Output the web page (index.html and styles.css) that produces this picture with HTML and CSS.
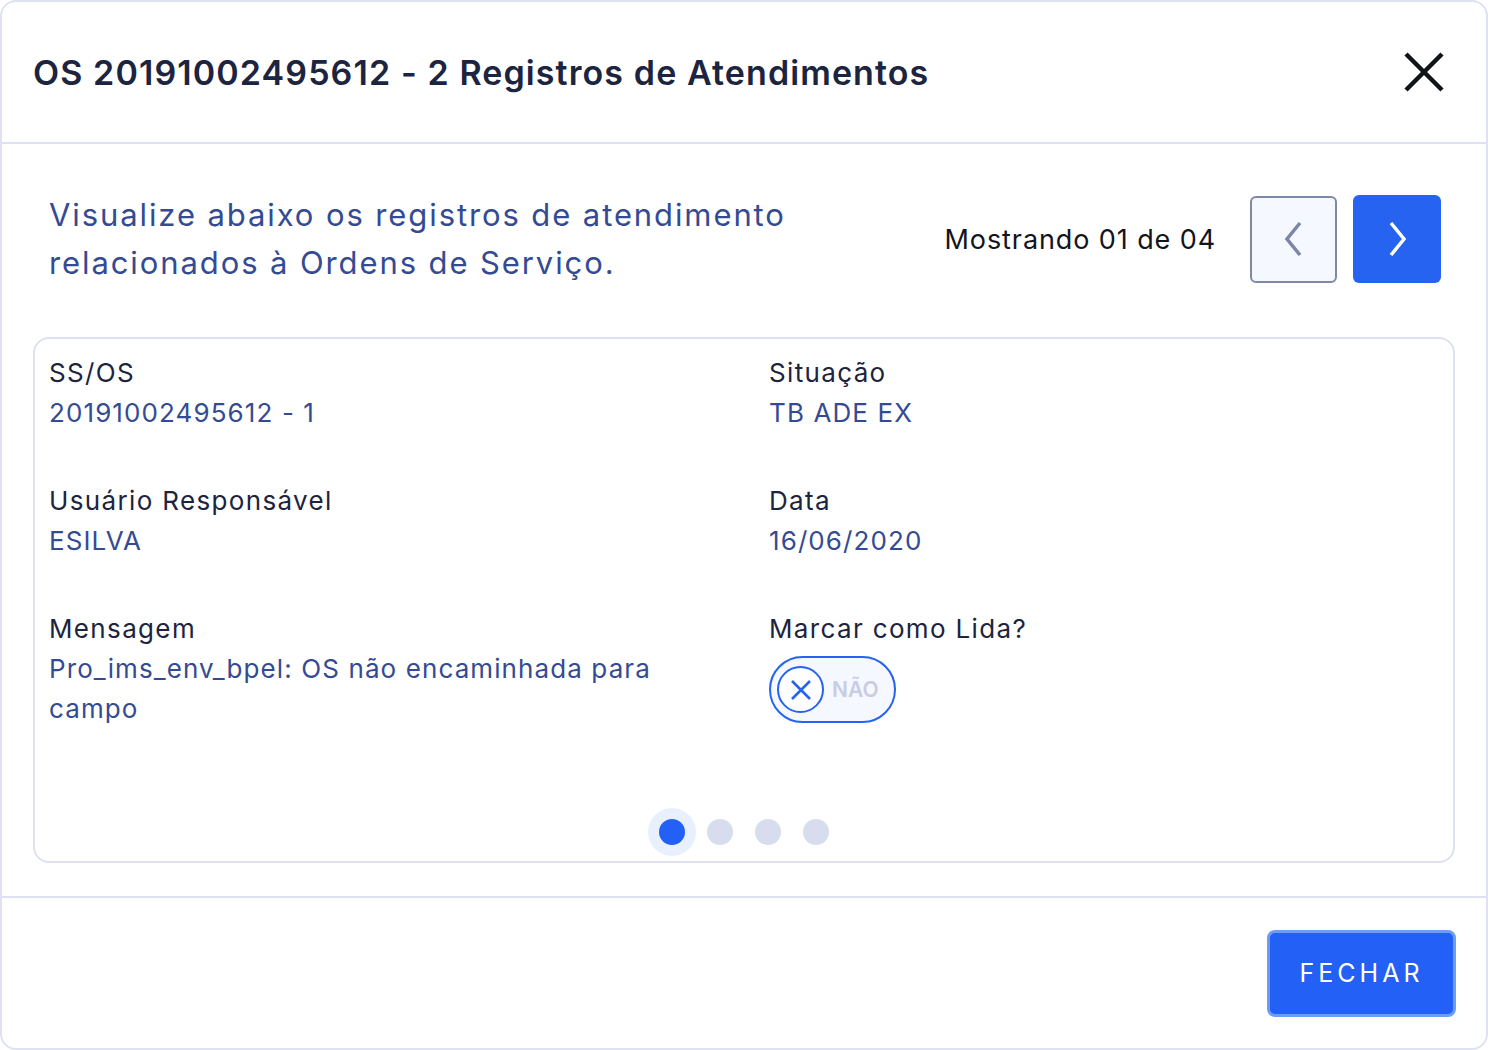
FILE: index.html
```html
<!DOCTYPE html>
<html lang="pt-BR">
<head>
  <meta charset="UTF-8" />
  <meta name="viewport" content="width=device-width, initial-scale=1.0" />
  <title>Registros de Atendimentos</title>
  <link rel="stylesheet" href="styles.css">
</head>

<body>
  <div class="modal">
    <!-- Header -->
    <div class="modal-header">
      <h1 class="modal-title">OS 20191002495612 - 2 Registros de Atendimentos</h1>
      <button class="close-button" aria-label="Fechar">
        <svg width="40" height="40" viewBox="0 0 40 40">
          <path d="M2 2 L38 38 M38 2 L2 38" stroke="#111418" stroke-width="4.5" fill="none" />
        </svg>
      </button>
    </div>

    <!-- Body -->
    <div class="modal-body">
      <div class="intro-row">
        <p class="intro-text">Visualize abaixo os registros de atendimento<br>relacionados à Ordens de Serviço.</p>
        <div class="pager">
          <span class="pager-count">Mostrando 01 de 04</span>
          <button class="pager-button prev" aria-label="Anterior">
            <svg width="24" height="36" viewBox="0 0 24 36">
              <path d="M18 2 L5 18 L18 34" stroke="#7d86a6" stroke-width="3.5" fill="none" />
            </svg>
          </button>
          <button class="pager-button next" aria-label="Próximo">
            <svg width="24" height="36" viewBox="0 0 24 36">
              <path d="M6 2 L19 18 L6 34" stroke="#fff" stroke-width="3.5" fill="none" />
            </svg>
          </button>
        </div>
      </div>

      <div class="record-card">
        <div class="record-grid">
          <div class="field">
            <div class="field-label">SS/OS</div>
            <div class="field-value">20191002495612 - 1</div>
          </div>
          <div class="field">
            <div class="field-label">Situação</div>
            <div class="field-value">TB ADE EX</div>
          </div>
          <div class="field">
            <div class="field-label">Usuário Responsável</div>
            <div class="field-value">ESILVA</div>
          </div>
          <div class="field">
            <div class="field-label">Data</div>
            <div class="field-value">16/06/2020</div>
          </div>
          <div class="field">
            <div class="field-label">Mensagem</div>
            <div class="field-value">Pro_ims_env_bpel: OS não encaminhada para campo</div>
          </div>
          <div class="field">
            <div class="field-label">Marcar como Lida?</div>
            <label class="toggle">
              <span class="toggle-knob">
                <svg width="22" height="22" viewBox="0 0 22 22">
                  <path d="M2 2 L20 20 M20 2 L2 20" stroke="#2563f0" stroke-width="2.6" fill="none" />
                </svg>
              </span>
              <span class="toggle-text">NÃO</span>
            </label>
          </div>
        </div>

        <div class="dots">
          <span class="dot active"></span>
          <span class="dot"></span>
          <span class="dot"></span>
          <span class="dot"></span>
        </div>
      </div>
    </div>

    <!-- Footer -->
    <div class="modal-footer">
      <button class="primary-button">FECHAR</button>
    </div>
  </div>
</body>
</html>
```

FILE: styles.css
```css
body {
  margin: 0;
  background-color: #fff;
  font-family: 'Inter', 'Open Sans', sans-serif;
  color: #1c2440;
}

.modal {
  height: 1050px;
  box-sizing: border-box;
  border: 2px solid #dfe2f2;
  border-radius: 16px;
  display: flex;
  flex-direction: column;
  overflow: hidden;
}

/* Header */
.modal-header {
  height: 142px;
  box-sizing: border-box;
  display: flex;
  align-items: center;
  justify-content: space-between;
  padding: 0 42px 0 31px;
  border-bottom: 2px solid #dde1f2;
}

.modal-title {
  margin: 0;
  font-size: 34px;
  font-weight: 600;
  letter-spacing: 1.1px;
  color: #1c2440;
}

.close-button {
  background: none;
  border: none;
  padding: 0;
  cursor: pointer;
  display: flex;
}

/* Body */
.modal-body {
  flex-grow: 1;
  padding: 47px 31px 0;
  border-bottom: 2px solid #dde1f2;
}

.intro-row {
  display: flex;
  align-items: center;
  justify-content: space-between;
  padding-left: 16px;
  padding-right: 14px;
}

.intro-text {
  margin: 0;
  font-size: 31px;
  line-height: 48px;
  letter-spacing: 1.9px;
  color: #344b93;
}

.pager {
  display: flex;
  align-items: center;
  gap: 16px;
}

.pager-count {
  font-size: 27px;
  letter-spacing: 0.9px;
  color: #12151c;
  margin-right: 18px;
}

.pager-button {
  width: 88px;
  height: 88px;
  box-sizing: border-box;
  border-radius: 6px;
  display: flex;
  align-items: center;
  justify-content: center;
  cursor: pointer;
}

.pager-button.prev {
  background-color: #f5f8fe;
  border: 2px solid #7f88a7;
  width: 87px;
  height: 87px;
}

.pager-button.next {
  background-color: #2563f0;
  border: none;
}

/* Record card */
.record-card {
  margin-top: 50px;
  border: 2px solid #dde1f2;
  border-radius: 16px;
  padding: 14px 14px 5px;
}

.record-grid {
  display: grid;
  grid-template-columns: 720px 1fr;
  row-gap: 48px;
}

.field-label {
  font-size: 26px;
  line-height: 40px;
  letter-spacing: 1.35px;
  color: #1c2440;
}

.field-value {
  font-size: 26px;
  line-height: 40px;
  letter-spacing: 1.1px;
  color: #344b93;
  max-width: 660px;
}

.toggle {
  margin-top: 7px;
  width: 127px;
  height: 67px;
  box-sizing: border-box;
  border: 2px solid #2563f0;
  border-radius: 34px;
  background-color: #f5f8ff;
  display: flex;
  align-items: center;
  padding-left: 6px;
  gap: 8px;
}

.toggle-knob {
  width: 47px;
  height: 47px;
  box-sizing: border-box;
  border: 2px solid #2563f0;
  border-radius: 50%;
  background-color: #fff;
  display: flex;
  align-items: center;
  justify-content: center;
}

.toggle-text {
  font-size: 21px;
  font-weight: 600;
  color: #c8cde3;
}

.dots {
  margin-top: 79px;
  display: flex;
  justify-content: center;
  align-items: center;
  gap: 22px;
  height: 48px;
}

.dot {
  width: 26px;
  height: 26px;
  border-radius: 50%;
  background-color: #d8dcef;
}

.dot.active {
  background-color: #2360f5;
  box-shadow: 0 0 0 11px #e8f0fd;
}

/* Footer */
.modal-footer {
  height: 150px;
  box-sizing: border-box;
  display: flex;
  align-items: center;
  justify-content: flex-end;
  padding: 0 30px 0;
}

.primary-button {
  width: 189px;
  height: 87px;
  background-color: #2360f5;
  border: 3px solid #6b9df6;
  border-radius: 8px;
  color: #fff;
  font-family: 'Inter', sans-serif;
  font-size: 25px;
  letter-spacing: 4px;
  cursor: pointer;
}
```
